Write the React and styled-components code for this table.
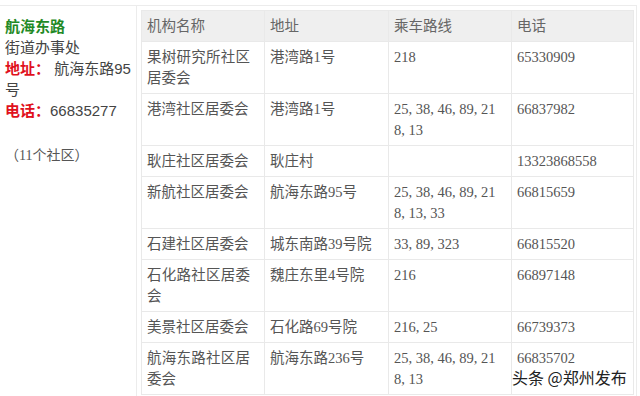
import React from "react";
import styled, { createGlobalStyle } from "styled-components";

const GlobalStyle = createGlobalStyle`
  body {
    margin: 0;
    background: #fff;
  }
`;

const Frame = styled.div`
  position: relative;
  display: flex;
  box-sizing: border-box;
  width: 637px;
  height: 391px;
  margin-top: 5px;
  border-top: 1px solid #ececec;
  border-right: 1px solid #ececec;
  overflow: hidden;
`;

const Sidebar = styled.div`
  box-sizing: border-box;
  width: 137px;
  flex-shrink: 0;
  padding: 10px 0 0 5px;
  border-right: 1px solid #ececec;
  font-family: "Liberation Sans", "Noto Sans CJK SC", sans-serif;
  font-size: 15px;
  line-height: 21px;
  color: #444;
`;

const Line = styled.div``;

const Label = styled.span`
  font-weight: 700;
  color: ${({ tone }) => tone};
`;

const Note = styled.div`
  margin-top: 24px;
  font-family: "Liberation Serif", "Noto Sans CJK SC", serif;
  font-size: 14px;
  color: #555;
`;

const Main = styled.div`
  padding: 4px 2px 0 4px;
`;

const Table = styled.table`
  width: 492px;
  table-layout: fixed;
  border-collapse: collapse;
  font-family: "Liberation Serif", "Noto Sans CJK SC", serif;
  font-size: 14.5px;
  line-height: 21px;
  color: #555;
`;

const Th = styled.th`
  box-sizing: border-box;
  width: ${({ w }) => w}px;
  padding: 5px 6px 4px 5px;
  background: #efefef;
  border: 1px solid #e9e9e9;
  font-weight: 400;
  text-align: left;
  color: #666;
`;

const Td = styled.td`
  padding: 5px 6px 4px 5px;
  border: 1px solid #e9e9e9;
  vertical-align: top;
  word-break: break-all;
`;

const Cell = styled.div`
  width: ${({ w }) => w}px;
  text-align: ${({ justify }) => (justify ? "justify" : "left")};
`;

const Watermark = styled.div`
  position: absolute;
  left: 512px;
  top: 360px;
  font-family: "Noto Sans CJK SC", sans-serif;
  font-size: 16px;
  line-height: 22px;
  color: #222;
  text-shadow: 0 0 2px #fff, 0 0 2px #fff;
  white-space: nowrap;
`;

const rows = [
  ["果树研究所社区居委会", "港湾路1号", "218", "65330909"],
  ["港湾社区居委会", "港湾路1号", "25, 38, 46, 89, 218, 13", "66837982"],
  ["耿庄社区居委会", "耿庄村", "", "13323868558"],
  ["新航社区居委会", "航海东路95号", "25, 38, 46, 89, 218, 13, 33", "66815659"],
  ["石建社区居委会", "城东南路39号院", "33, 89, 323", "66815520"],
  ["石化路社区居委会", "魏庄东里4号院", "216", "66897148"],
  ["美景社区居委会", "石化路69号院", "216, 25", "66739373"],
  ["航海东路社区居委会", "航海东路236号", "25, 38, 46, 89, 218, 13", "66835702"],
];

export default function App() {
  return (
    <>
      <GlobalStyle />
      <Frame>
        <Sidebar>
          <Line>
            <Label tone="#1f8a26">航海东路</Label>
          </Line>
          <Line>街道办事处</Line>
          <Line>
            <Label tone="#e0101c">地址：</Label> 航海东路95号
          </Line>
          <Line>
            <Label tone="#e0101c">电话：</Label>66835277
          </Line>
          <Note>（11个社区）</Note>
        </Sidebar>
        <Main>
          <Table>
            <thead>
              <tr>
                <Th w={123}>机构名称</Th>
                <Th w={124}>地址</Th>
                <Th w={123}>乘车路线</Th>
                <Th w={122}>电话</Th>
              </tr>
            </thead>
            <tbody>
              {rows.map((r, i) => (
                <tr key={i}>
                  <Td>
                    <Cell w={103} justify>{r[0]}</Cell>
                  </Td>
                  <Td>
                    <Cell w={110}>{r[1]}</Cell>
                  </Td>
                  <Td>
                    <Cell w={108}>{r[2]}</Cell>
                  </Td>
                  <Td>
                    <Cell w={110}>{r[3]}</Cell>
                  </Td>
                </tr>
              ))}
            </tbody>
          </Table>
        </Main>
        <Watermark>头条 @郑州发布</Watermark>
      </Frame>
    </>
  );
}
